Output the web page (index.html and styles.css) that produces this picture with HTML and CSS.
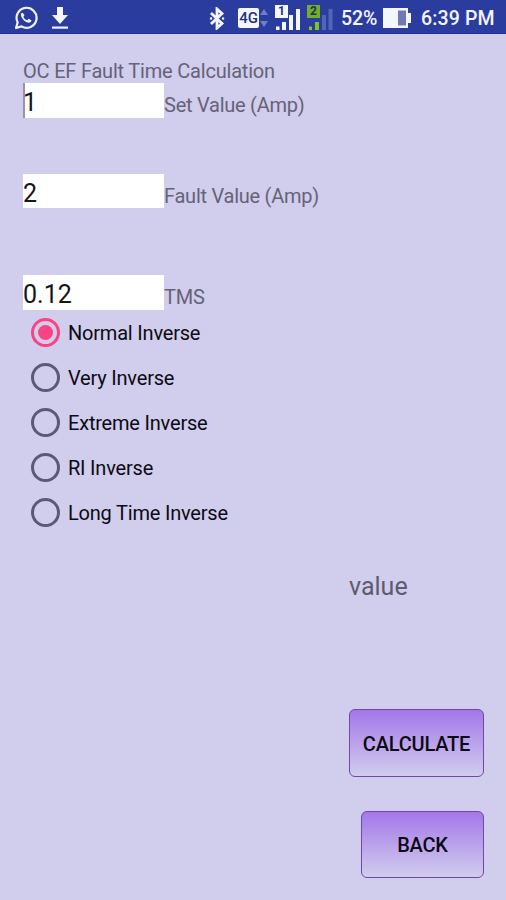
FILE: index.html
```html
<!DOCTYPE html>
<html lang="en">
<head>
<meta charset="utf-8">
<title>OC EF Fault Time Calculation</title>
<link rel="stylesheet" href="styles.css">
</head>
<body>
<header class="status">
  <svg class="whatsapp" width="24" height="24" viewBox="0 0 24 24" fill="none" stroke="#f0f3ff">
    <path d="M2 22l1.700-5.600A10 10 0 1 1 7.500 20.400z" stroke-width="2.200" stroke-linejoin="round"/>
    <path d="M8.600 6.700c-.5-.2-1.200.2-1.500.8-1.300 3.300 3.800 9.200 7.700 9.200 1.500 0 2.700-1.100 2.600-2.500l-2.700-1.500-1.500 1.600c-1.700-.6-3.100-2-3.800-3.600l1.100-1.400z" fill="#f0f3ff" stroke="none"/>
  </svg>
  <svg class="download" width="18" height="23" viewBox="0 0 18 23" fill="#f3f5ff">
    <path d="M6 0h6v8h5l-8 9-8-9h5z"/><path d="M1 19.500h16v2.200H1z"/>
  </svg>
  <svg class="bluetooth" width="16" height="23" viewBox="0 0 16 23" fill="none" stroke="#f3f5ff" stroke-width="2.800">
    <path d="M2 6l11 10.500-5 4.500V2l5 4.500L2 17"/><path d="M2 11.500h.1M14 11.500h.1" stroke-width="2.400" stroke-linecap="round"/>
  </svg>
  <span class="network">4G</span>
  <svg class="arrows" width="8" height="18" viewBox="0 0 8 18" fill="#6e7fc9"><path d="M0 6l4-6 4 6zM0 12h8l-4 6z"/></svg>
  <div class="signal">
    <svg width="26" height="26" viewBox="0 0 26 26" fill="#f3f5ff"><path d="M1 21.500h3.500V25H1zM7 17h4v8H7zM14 10h4v15h-4zM21 4h4v21h-4z"/></svg>
    <span class="sim">1</span>
  </div>
  <div class="signal second">
    <svg width="26" height="26" viewBox="0 0 26 26"><path d="M2 21.500h3V25H2zM8 17h4v8H8z" fill="#80c51f"/><path d="M15 10h4v15h-4zM21.500 4h4v21h-4z" fill="#5365b8"/></svg>
    <span class="sim">2</span>
  </div>
  <span class="percent">52%</span>
  <svg class="battery" width="28" height="20" viewBox="0 0 28 20"><path d="M0 0h25v5h3v10h-3v5H0z" fill="#f3f5ff"/><path d="M15 2.500h8v15h-8z" fill="#7078b8"/></svg>
  <span class="clock">6:39 PM</span>
</header>
<main class="form">
  <h1 class="title"><span>OC EF Fault Time Calculation</span></h1>
  <div class="field focused"><div class="box">1</div><span class="label set">Set Value (Amp)</span></div>
  <div class="field fault"><div class="box">2</div><span class="label">Fault Value (Amp)</span></div>
  <div class="field tms"><div class="box">0.12</div><span class="label">TMS</span></div>
  <div class="options">
    <div class="option checked"><i class="radio"></i><span>Normal Inverse</span></div>
    <div class="option"><i class="radio"></i><span>Very Inverse</span></div>
    <div class="option"><i class="radio"></i><span>Extreme Inverse</span></div>
    <div class="option"><i class="radio"></i><span>RI Inverse</span></div>
    <div class="option"><i class="radio"></i><span>Long Time Inverse</span></div>
  </div>
  <div class="result">value</div>
  <div class="actions">
    <button class="button calculate">CALCULATE</button>
    <button class="button back">BACK</button>
  </div>
</main>
</body>
</html>
```
FILE: styles.css
```css
* { box-sizing: border-box; }
body { margin: 0; width: 506px; height: 900px; overflow: hidden; background: #d1cdec; font-family: Roboto, sans-serif; color: #0c0a14; }
.status { height: 34px; display: flex; align-items: center; padding: 3px 0 0 14px; background: #2b3c9f; border-bottom: 1px solid #2030a0; color: #f3f5ff; }
.status svg { display: block; flex: none; }
.download { margin-left: 13px; }
.bluetooth { margin-left: 140px; }
.network { margin-left: 13px; width: 21px; height: 20px; border-radius: 2px; background: #f5f7ff; color: #24317f; font-size: 15px; font-weight: 500; line-height: 21px; text-align: center; }
.arrows { margin-left: 1px; }
.signal { position: relative; margin-left: 7px; width: 26px; height: 26px; }
.second { margin-left: 6px; }
.sim { position: absolute; left: 0; top: 0; width: 13px; height: 13px; background: #f5f7ff; color: #24317f; font-size: 12px; font-weight: 700; line-height: 13px; text-align: center; }
.second .sim { background: #72ad2b; color: #19345b; }
.percent { margin-left: 8px; width: 37px; font-size: 19.5px; font-weight: 500; line-height: 24px; letter-spacing: -0.1px; padding-top: 2px; white-space: nowrap; }
.battery { margin-left: 5px; }
.clock { margin-left: 10px; font-size: 19.5px; font-weight: 500; line-height: 24px; letter-spacing: 0.15px; padding-top: 2px; white-space: nowrap; }
.form { padding: 25px 22px 0 23px; }
.title { margin: 0; height: 24px; font-size: 20px; font-weight: 400; line-height: 24px; letter-spacing: -0.2px; color: #666278; white-space: nowrap; }
.field { height: 35px; display: flex; }
.box { width: 141px; height: 35px; background: #fff; font-size: 25px; line-height: 39px; color: #15151a; }
.focused .box { border-left: 2px solid #96959f; text-indent: -2px; }
.label { padding-top: 10px; font-size: 20px; line-height: 24px; letter-spacing: -0.25px; color: #666278; white-space: nowrap; }
.fault { margin-top: 56px; }
.fault .box { height: 34px; }
.tms { margin-top: 66px; }
.options { padding-left: 8px; }
.option { height: 45px; display: flex; align-items: center; gap: 8px; font-size: 20px; letter-spacing: -0.2px; white-space: nowrap; }
.radio { width: 29px; height: 29px; border: 3px solid #5d5875; border-radius: 50%; display: flex; align-items: center; justify-content: center; flex: none; }
.checked .radio { border-color: #fa4284; }
.checked .radio::before { content: ""; width: 15px; height: 15px; border-radius: 50%; background: #fa4284; }
.result { margin: 37px 0 0 326px; height: 30px; font-size: 25px; line-height: 30px; color: #5e5a70; }
.actions { display: flex; flex-direction: column; align-items: flex-end; gap: 34px; margin-top: 107px; }
.button { height: 68px; padding: 1px 0 0; border: 1px solid #7048ad; border-radius: 6px; background: linear-gradient(#a377e9, #d1cdec); font-family: Roboto, sans-serif; font-size: 20px; font-weight: 500; letter-spacing: -0.2px; color: #0c0a14; }
.calculate { width: 135px; }
.back { width: 123px; height: 67px; }
```
